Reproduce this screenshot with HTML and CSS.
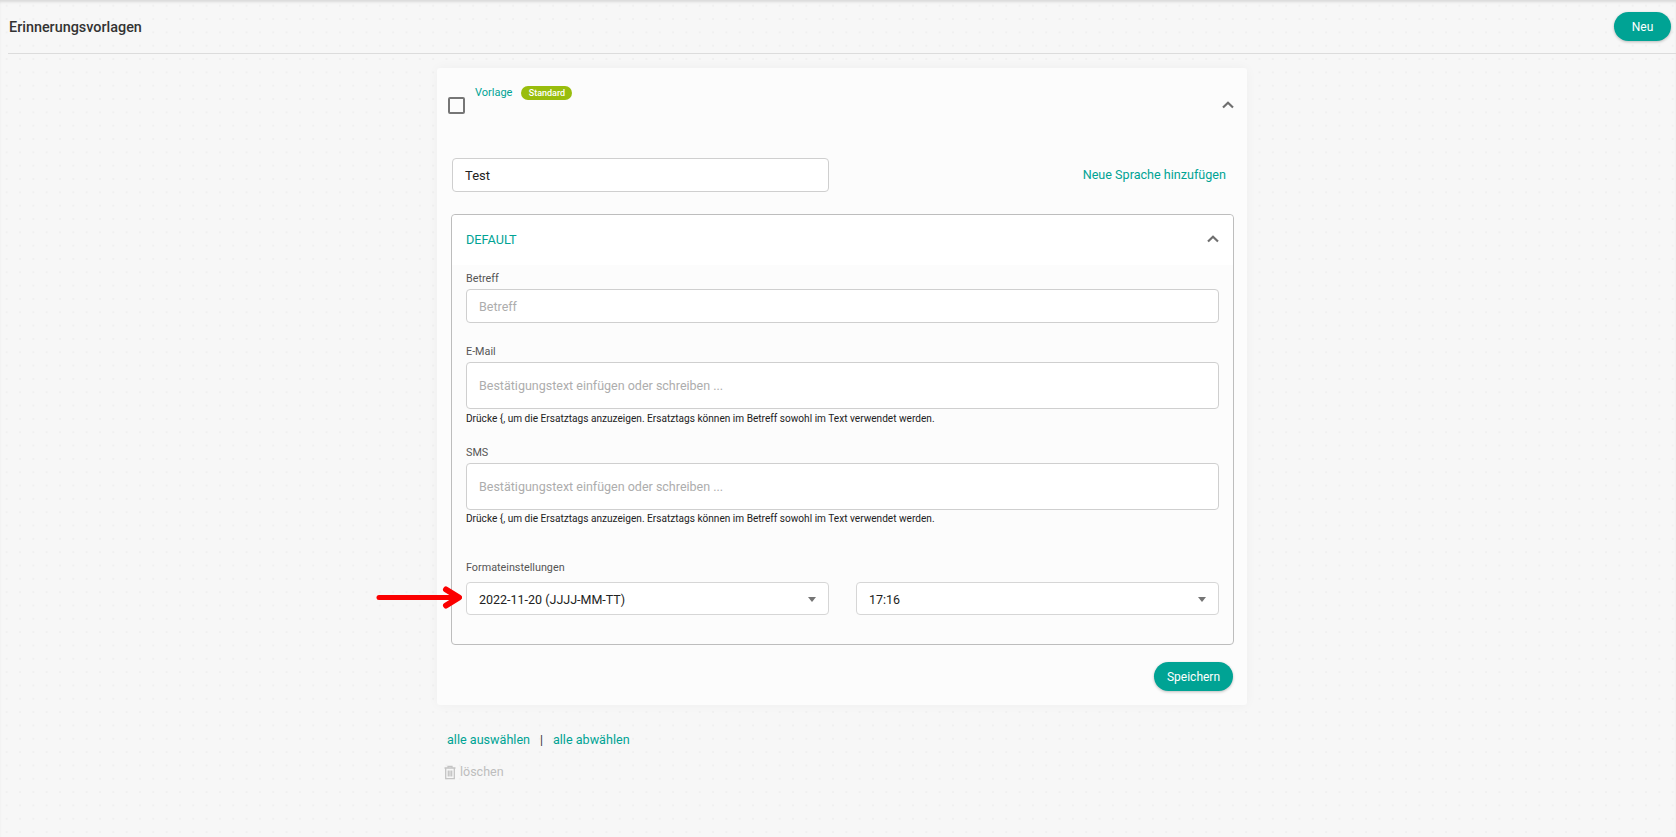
FILE: index.html
```html
<!DOCTYPE html>
<html lang="de">
<head>
<meta charset="utf-8">
<title>Erinnerungsvorlagen</title>
<link rel="stylesheet" href="styles.css">
</head>
<body>
<header class="topbar">
  <h1 class="page-title">Erinnerungsvorlagen</h1>
  <button class="pill pill-new">Neu</button>
</header>
<main class="content">
  <section class="card">
    <div class="card-head">
      <span class="checkbox"></span>
      <div class="card-name"><span class="teal">Vorlage</span><span class="badge">Standard</span></div>
      <svg class="chevron" viewBox="0 0 12 8"><path d="M1 6.500 6 1.800l5 4.700" fill="none" stroke="#6f6f6f" stroke-width="2.200"/></svg>
    </div>
    <div class="name-row">
      <div class="field name-field">Test</div>
      <a class="add-lang">Neue Sprache hinzufügen</a>
    </div>
    <div class="lang-box">
      <div class="lang-head">
        <span class="teal">DEFAULT</span>
        <svg class="chevron" viewBox="0 0 12 8"><path d="M1 6.500 6 1.800l5 4.700" fill="none" stroke="#6f6f6f" stroke-width="2.200"/></svg>
      </div>
      <div class="lang-body">
        <label class="lbl lbl-first">Betreff</label>
        <div class="field subject placeholder">Betreff</div>
        <label class="lbl lbl-mail">E-Mail</label>
        <div class="field area placeholder">Bestätigungstext einfügen oder schreiben ...</div>
        <p class="hint">Drücke {, um die Ersatztags anzuzeigen. Ersatztags können im Betreff sowohl im Text verwendet werden.</p>
        <label class="lbl lbl-sms">SMS</label>
        <div class="field area placeholder">Bestätigungstext einfügen oder schreiben ...</div>
        <p class="hint hint-sms">Drücke {, um die Ersatztags anzuzeigen. Ersatztags können im Betreff sowohl im Text verwendet werden.</p>
        <label class="lbl lbl-format">Formateinstellungen</label>
        <div class="select-row">
          <div class="field select"><span>2022-11-20 (JJJJ-MM-TT)</span><i class="caret"></i></div>
          <div class="field select"><span>17:16</span><i class="caret"></i></div>
        </div>
      </div>
    </div>
    <div class="card-foot"><button class="pill pill-save">Speichern</button></div>
    <svg class="arrow" viewBox="0 0 88 24"><path d="M5 11.500H84" fill="none" stroke="#fb0000" stroke-width="5" stroke-linecap="round"/><path d="M72 3.500 85 11.500 72 19.500" fill="none" stroke="#fb0000" stroke-width="6" stroke-linecap="round" stroke-linejoin="round"/></svg>
  </section>
  <div class="bulk">
    <a class="teal">alle auswählen</a><span class="sep">|</span><a class="teal">alle abwählen</a>
  </div>
  <div class="delete">
    <svg class="trash" viewBox="0 0 12 14"><path d="M.5 2.500h11M4 2.500V.8h4v1.700M1.700 2.500v10.700h8.600V2.500M4.300 5v6M6 5v6M7.700 5v6" fill="none" stroke="#c4c4c4" stroke-width="1.300"/></svg>
    <span>löschen</span>
  </div>
</main>
</body>
</html>
```

FILE: styles.css
```css
* { box-sizing: border-box; }
html, body { height: 100%; }
body {
  margin: 0;
  height: 837px;
  overflow: hidden;
  font-family: Roboto, "Liberation Sans", sans-serif;
  color: #222;
  background-color: #f7f7f7;
  background-image: radial-gradient(circle at 6.500px 5.500px, #f0f0f0 1px, transparent 1.200px);
  background-size: 13.330px 13.330px;
  box-shadow: inset 0 3px 3px -1px #d9d9d9;
}
.topbar {
  height: 54px;
  margin-left: 8px;
  padding: 12px 5px 0 0;
  border-bottom: 1px solid #dcdcdc;
  display: flex;
  justify-content: space-between;
  align-items: flex-start;
}
.page-title { margin: 8px 0 0 1px; font-size: 14.400px; font-weight: 500; line-height: 16px; color: #333; }
.pill {
  border: 0;
  border-radius: 15px;
  background: #00a394;
  color: #fff;
  font: 400 12px/16px Roboto, sans-serif;
  box-shadow: 0 1px 3px rgba(0,0,0,.25);
  padding: 0;
}
.pill-new { width: 57px; height: 29px; }
.pill-save { width: 79px; height: 29px; }
.content { width: 810px; margin: 14px 0 0 437px; }
.card {
  position: relative;
  height: 637px;
  background: #fcfcfc;
  border-radius: 3px;
  box-shadow: 0 0 12px rgba(0,0,0,.04);
  padding: 0 13px 0 15px;
}
.teal { color: #00a394; }
.card-head { height: 90px; position: relative; }
.checkbox {
  position: absolute; left: -4px; top: 29px;
  width: 17px; height: 17px;
  border: 2px solid #767676; border-radius: 2px;
}
.card-name { position: absolute; left: 23px; top: 18px; display: flex; align-items: center; font-size: 11px; line-height: 14px; }
.badge {
  margin-left: 9px;
  height: 14px; width: 51px;
  border-radius: 7px;
  background: #99bd0d;
  color: #fff;
  font-size: 9px; font-weight: 500; line-height: 14px; text-align: center;
}
.chevron { width: 12px; height: 8px; display: block; }
.card-head .chevron { position: absolute; right: 0; top: 33px; }
.name-row { display: flex; justify-content: space-between; align-items: center; padding-right: 8px; }
.field { background: #fff; border: 1px solid #cfcfcf; border-radius: 4px; font-size: 12.500px; }
.name-field { width: 377px; height: 34px; padding-left: 12px; line-height: 33px; color: #222; font-size: 13px; }
.add-lang { color: #00a394; font-size: 12.600px; margin-top: -2px; }
.lang-box { margin-top: 22px; margin-left: -1px; height: 431px; border: 1px solid #bdbdbd; border-radius: 4px; }
.lang-head { height: 50px; background: #fff; display: flex; justify-content: space-between; align-items: center; padding: 0 14px 2px; font-size: 12.700px; border-radius: 4px 4px 0 0; }
.lang-body { padding: 0 14px; }
.lbl { display: block; font-size: 10.800px; line-height: 14px; color: #555; }
.lbl-first { margin-top: 7px; }
.lbl-mail { margin-top: 22px; }
.lbl-sms { margin-top: 21px; }
.lbl-format { margin-top: 36px; }
.subject { height: 34px; margin-top: 3px; padding-left: 12px; line-height: 33px; }
.area { height: 47px; margin-top: 3px; padding-left: 12px; line-height: 45px; }
.placeholder { color: #adadad; }
.hint { margin: 4px 0 0; font-size: 10.100px; line-height: 12px; color: #222; }
.hint-sms { margin-top: 3px; }
.select-row { display: grid; grid-template-columns: 363px 363px; justify-content: space-between; margin-top: 7px; }
.select { height: 33px; padding: 1px 12px 0; display: flex; align-items: center; justify-content: space-between; color: #222; border-color: #d6d6d6; }
.caret { width: 0; height: 0; border: 4px solid transparent; border-top: 5px solid #757575; border-bottom: 0; }
.card-foot { display: flex; justify-content: flex-end; margin: 17px 1px 0 0; }
.arrow { position: absolute; left: -63px; top: 518px; width: 88px; height: 24px; }
.bulk { margin: 27px 0 0 10px; font-size: 12.600px; line-height: 16px; display: flex; }
.sep { margin: 0 10px; color: #333; font-size: 12px; }
.delete { margin: 16px 0 0 7px; display: flex; align-items: center; gap: 4px; font-size: 12.500px; line-height: 16px; color: #bdbdbd; }
.trash { width: 12px; height: 15px; display: block; }
```
